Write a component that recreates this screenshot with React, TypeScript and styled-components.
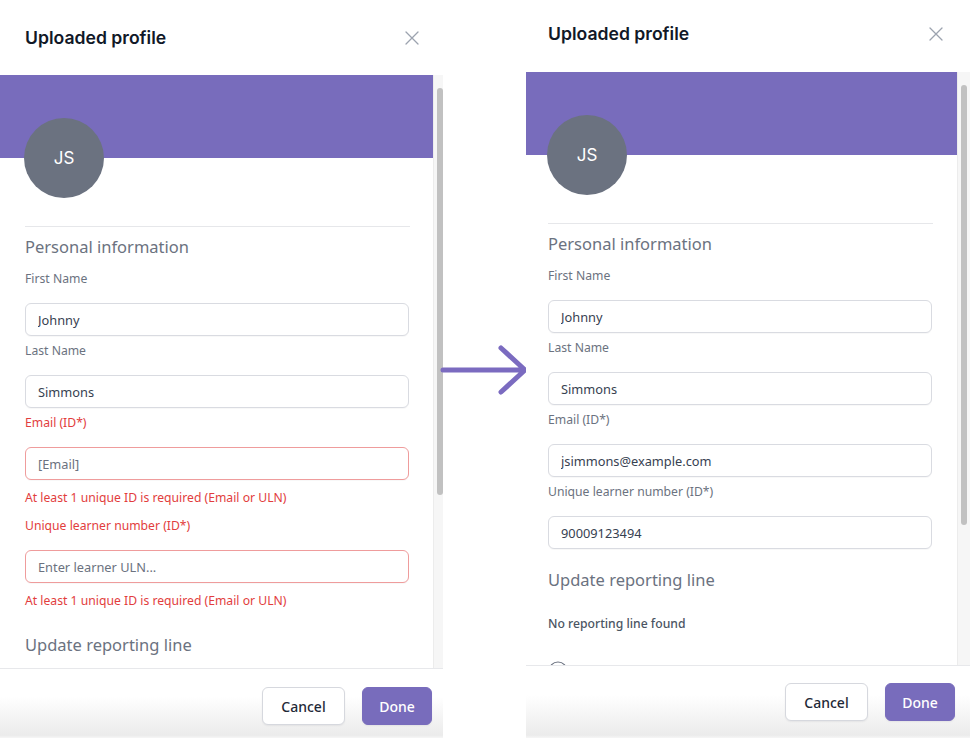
import React from "react";
import styled, { createGlobalStyle } from "styled-components";

const GlobalStyle = createGlobalStyle`
  html, body { margin: 0; padding: 0; background: #ffffff; }
  body { font-family: "Noto Sans", "Open Sans", sans-serif; }
  * { box-sizing: border-box; }
`;

const PURPLE = "#786cbc";
const RED = "#e23d3d";

const Page = styled.div`
  width: 970px;
  height: 738px;
  display: flex;
  overflow: hidden;
  background: #ffffff;
`;

const Panel = styled.section<{ $width: number }>`
  width: ${(p) => p.$width}px;
  height: 738px;
  flex-shrink: 0;
  display: flex;
  flex-direction: column;
  background: #ffffff;
`;

const Header = styled.header<{ $height: number; $padTop: number; $padLeft: number; $padRight: number }>`
  height: ${(p) => p.$height}px;
  flex-shrink: 0;
  padding: ${(p) => p.$padTop}px ${(p) => p.$padRight}px 0 ${(p) => p.$padLeft}px;
  display: flex;
  justify-content: space-between;
  align-items: flex-start;
`;

const Title = styled.h2`
  margin: 0;
  font-family: Inter, "Liberation Sans", sans-serif;
  font-weight: 600;
  font-size: 17.6px;
  line-height: 20px;
  color: #111827;
`;

const CloseButton = styled.button`
  border: 0;
  background: none;
  padding: 0;
  margin-top: 3px;
  width: 14px;
  height: 14px;
  display: block;
  cursor: pointer;
  svg { display: block; }
`;

const Body = styled.div<{ $height: number }>`
  height: ${(p) => p.$height}px;
  flex-shrink: 0;
  display: flex;
  overflow: hidden;
`;

const Scroller = styled.div`
  flex: 1;
  min-width: 0;
  overflow: hidden;
  display: flex;
  flex-direction: column;
`;

const Track = styled.div<{ $width: number }>`
  width: ${(p) => p.$width}px;
  flex-shrink: 0;
  background: #f6f6f6;
  border-left: 1px solid #ececec;
  padding-left: 3px;
`;

const Thumb = styled.div<{ $top: number; $height: number }>`
  margin-top: ${(p) => p.$top}px;
  width: 6px;
  height: ${(p) => p.$height}px;
  border-radius: 3px;
  background: #c1c1c1;
`;

const Banner = styled.div`
  height: 83px;
  flex-shrink: 0;
  background: ${PURPLE};
`;

const Content = styled.div<{ $padLeft: number }>`
  padding-left: ${(p) => p.$padLeft}px;
  display: flex;
  flex-direction: column;
  align-items: flex-start;
`;

const Avatar = styled.div`
  width: 80px;
  height: 80px;
  margin-top: -40px;
  margin-left: -1px;
  border-radius: 50%;
  background: #6b7280;
  color: #ffffff;
  display: flex;
  align-items: center;
  justify-content: center;
  font-family: Inter, "Liberation Sans", sans-serif;
  font-size: 17px;
  font-weight: 400;
  position: relative;
`;

const Divider = styled.hr`
  margin: 28px 0 0 0;
  border: 0;
  width: 385px;
  height: 1px;
  background: #e6e7ea;
`;

const SectionTitle = styled.h3<{ $mt: number }>`
  margin: ${(p) => p.$mt}px 0 0 0;
  font-size: 16.5px;
  line-height: 24px;
  font-weight: 400;
  color: #6b7280;
`;

const Field = styled.div<{ $mt: number }>`
  margin-top: ${(p) => p.$mt}px;
  display: flex;
  flex-direction: column;
`;

const Label = styled.label<{ $error?: boolean }>`
  font-size: 12.2px;
  line-height: 18px;
  color: ${(p) => (p.$error ? RED : "#6b7280")};
`;

const Input = styled.input<{ $error?: boolean }>`
  margin-top: 15px;
  width: 384px;
  height: 33px;
  padding: 0 12px;
  border: 1px solid ${(p) => (p.$error ? "#ef9c9c" : "#d9dbe1")};
  border-radius: 6px;
  font-family: "Noto Sans", "Open Sans", sans-serif;
  font-size: 12.8px;
  color: #374151;
  background: #ffffff;
  outline: none;
  box-shadow: 0 1px 1px rgba(17, 24, 39, 0.03);
  &::placeholder { color: #6b7280; }
`;

const ErrorText = styled.div`
  margin-top: 9px;
  margin-bottom: 4px;
  font-size: 12.2px;
  line-height: 18px;
  color: ${RED};
`;

const InfoText = styled.p`
  margin: 23px 0 0 0;
  font-size: 12.2px;
  line-height: 18px;
  font-weight: 500;
  color: #4b5563;
`;

const AddRow = styled.div`
  margin-top: 28px;
  display: flex;
  align-items: center;
  gap: 10px;
  font-size: 13px;
  font-weight: 500;
  color: #374151;
  svg { display: block; }
`;

const Footer = styled.footer<{ $padTop: number; $padRight: number }>`
  flex: 1;
  border-top: 1px solid #e7e8eb;
  padding: ${(p) => p.$padTop}px ${(p) => p.$padRight}px 0 0;
  display: flex;
  justify-content: flex-end;
  align-items: flex-start;
  gap: 17px;
  background: linear-gradient(to bottom, #ffffff 0%, #ffffff 40%, #ebebeb 96%, #f6f6f6 100%);
`;

const Button = styled.button<{ $primary?: boolean; $width: number }>`
  width: ${(p) => p.$width}px;
  height: 38px;
  border-radius: 6px;
  font-family: "Noto Sans", "Open Sans", sans-serif;
  font-size: 14px;
  font-weight: 500;
  cursor: pointer;
  border: 1px solid ${(p) => (p.$primary ? PURPLE : "#d6d8de")};
  background: ${(p) => (p.$primary ? PURPLE : "#ffffff")};
  color: ${(p) => (p.$primary ? "#ffffff" : "#1f2937")};
  box-shadow: 0 1px 2px rgba(17, 24, 39, 0.06);
`;

const ArrowColumn = styled.div`
  width: 83px;
  flex-shrink: 0;
  display: flex;
  align-items: center;
  padding-top: 2px;
  svg { display: block; overflow: visible; }
`;

const CloseIcon = () => (
  <svg width="14" height="14" viewBox="0 0 14 14" fill="none">
    <path d="M1 1L13 13M13 1L1 13" stroke="#9ca3af" strokeWidth="1.3" strokeLinecap="round" />
  </svg>
);

const PlusCircle = () => (
  <svg width="20" height="20" viewBox="0 0 20 20" fill="none">
    <circle cx="10" cy="10" r="9" stroke="#6b7280" strokeWidth="1.2" />
    <path d="M10 6v8M6 10h8" stroke="#6b7280" strokeWidth="1.2" strokeLinecap="round" />
  </svg>
);

type FieldDef = {
  label: string;
  value?: string;
  placeholder?: string;
  error?: string;
};

type PanelProps = {
  width: number;
  headerHeight: number;
  titleTop: number;
  padLeft: number;
  closeRight: number;
  bodyHeight: number;
  trackWidth: number;
  thumbHeight: number;
  footerTop: number;
  footerRight: number;
  fields: FieldDef[];
  showReporting?: boolean;
};

const ProfilePanel: React.FC<PanelProps> = (p) => (
  <Panel $width={p.width}>
    <Header $height={p.headerHeight} $padTop={p.titleTop} $padLeft={p.padLeft} $padRight={p.closeRight}>
      <Title>Uploaded profile</Title>
      <CloseButton aria-label="Close">
        <CloseIcon />
      </CloseButton>
    </Header>
    <Body $height={p.bodyHeight}>
      <Scroller>
        <Banner />
        <Content $padLeft={p.padLeft}>
          <Avatar>JS</Avatar>
          <Divider />
          <SectionTitle $mt={8}>Personal information</SectionTitle>
          {p.fields.map((f, i) => (
            <Field key={f.label} $mt={i === 0 ? 11 : 6}>
              <Label $error={!!f.error}>{f.label}</Label>
              <Input
                $error={!!f.error}
                defaultValue={f.value}
                placeholder={f.placeholder}
                readOnly
              />
              {f.error && <ErrorText>{f.error}</ErrorText>}
            </Field>
          ))}
          <SectionTitle $mt={19}>Update reporting line</SectionTitle>
          {p.showReporting && (
            <>
              <InfoText>No reporting line found</InfoText>
              <AddRow>
                <PlusCircle />
                <span>Add reporting line</span>
              </AddRow>
            </>
          )}
        </Content>
      </Scroller>
      <Track $width={p.trackWidth}>
        <Thumb $top={13} $height={p.thumbHeight} />
      </Track>
    </Body>
    <Footer $padTop={p.footerTop} $padRight={p.footerRight}>
      <Button $width={83}>Cancel</Button>
      <Button $primary $width={70}>Done</Button>
    </Footer>
  </Panel>
);

const errorMsg = "At least 1 unique ID is required (Email or ULN)";

const leftFields: FieldDef[] = [
  { label: "First Name", value: "Johnny" },
  { label: "Last Name", value: "Simmons" },
  { label: "Email (ID*)", placeholder: "[Email]", error: errorMsg },
  { label: "Unique learner number (ID*)", placeholder: "Enter learner ULN...", error: errorMsg },
];

const rightFields: FieldDef[] = [
  { label: "First Name", value: "Johnny" },
  { label: "Last Name", value: "Simmons" },
  { label: "Email (ID*)", value: "jsimmons@example.com" },
  { label: "Unique learner number (ID*)", value: "90009123494" },
];

export default function App() {
  return (
    <>
      <GlobalStyle />
      <Page>
        <ProfilePanel
          width={443}
          headerHeight={75}
          titleTop={28}
          padLeft={25}
          closeRight={24}
          bodyHeight={593}
          trackWidth={10}
          thumbHeight={407}
          footerTop={18}
          footerRight={11}
          fields={leftFields}
        />
        <ArrowColumn>
          <svg width="83" height="50" viewBox="0 0 83 50" fill="none">
            <path d="M0 25H81M58 3L82 25L58 47" stroke="#7b6bc0" strokeWidth="5" strokeLinecap="round" strokeLinejoin="round" />
          </svg>
        </ArrowColumn>
        <ProfilePanel
          width={444}
          headerHeight={72}
          titleTop={24}
          padLeft={22}
          closeRight={27}
          bodyHeight={593}
          trackWidth={13}
          thumbHeight={440}
          footerTop={17}
          footerRight={15}
          fields={rightFields}
          showReporting
        />
      </Page>
    </>
  );
}
